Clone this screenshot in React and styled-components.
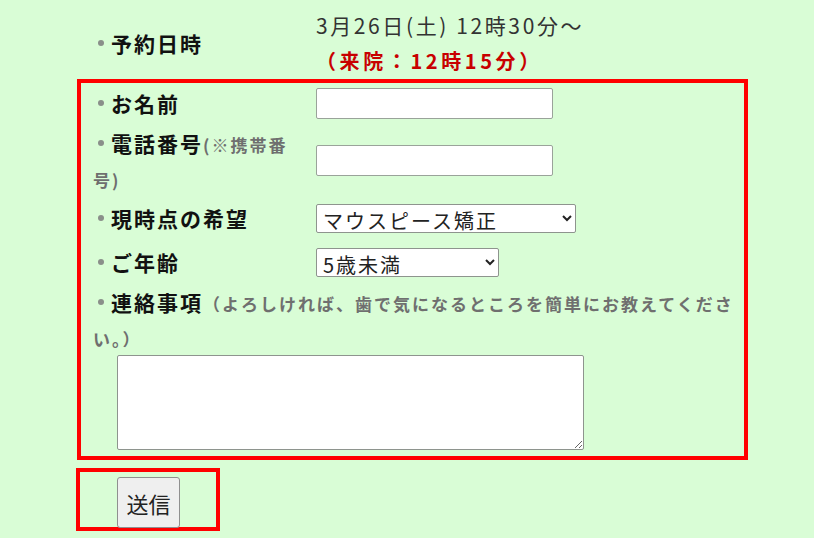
import React from 'react';
import styled, { createGlobalStyle } from 'styled-components';

const GlobalStyle = createGlobalStyle`
  body {
    margin: 0;
    background: #d9fdd6;
    font-family: "Noto Sans CJK JP", "Noto Sans", sans-serif;
    color: #111;
  }
`;

const Page = styled.div`
  padding: 7px 0 0 77px;
`;

const Summary = styled.div`
  display: flex;
  align-items: center;
  padding-left: 16px;
`;

const Label = styled.div`
  flex: none;
  width: ${props => (props.$wide ? 'auto' : '205px')};
  line-height: 35px;
  font-size: 21px;
  font-weight: 700;
  letter-spacing: 2px;
  color: #111;
`;

const Bullet = styled.span`
  display: inline-block;
  width: 6px;
  height: 6px;
  margin: 0 7px 0 5px;
  border-radius: 50%;
  background: #8a8f8a;
  vertical-align: 6px;
  line-height: 0;
`;

const Note = styled.span`
  font-size: 17px;
  line-height: 1;
  letter-spacing: 2px;
  color: #6f6f6f;
`;

const Schedule = styled.div`
  margin-left: 18px;
  line-height: 36px;
`;

const DateText = styled.div`
  font-size: 21px;
  letter-spacing: 2.6px;
  color: #333;
`;

const Arrival = styled.div`
  font-size: 20px;
  font-weight: 700;
  letter-spacing: 3.6px;
  color: #c80000;
`;

const FormBox = styled.div`
  box-sizing: border-box;
  width: 671px;
  border: 4px solid #ff0000;
  padding: 0 0 6.5px 12px;
`;

const Row = styled.div`
  display: flex;
  align-items: center;
  padding: 2.5px 0;
  margin-top: ${props => props.$offset || 0}px;
`;

const Control = styled.div`
  margin-left: 18px;
  display: flex;
`;

const TextInput = styled.input`
  box-sizing: border-box;
  width: 237px;
  height: 31px;
  border: 1px solid #9aa39a;
  border-radius: 2px;
  background: #fff;
  padding: 0 6px;
  font-size: 18px;
`;

const Select = styled.select`
  box-sizing: border-box;
  width: ${props => props.$width}px;
  height: 29px;
  border: 1px solid #8e948e;
  border-radius: 2px;
  background: #fff;
  color: #222;
  padding: 0 2px;
  font-family: "Noto Sans CJK JP", sans-serif;
  font-size: 20px;
  line-height: 27px;
  letter-spacing: 2px;
`;

const MessageBlock = styled.div`
  padding-top: 2.5px;
`;

const Message = styled.textarea`
  display: block;
  box-sizing: border-box;
  width: 467px;
  height: 95px;
  margin-left: 24px;
  border: 1px solid #8e948e;
  border-radius: 2px;
  background: #fff;
  resize: both;
`;

const SubmitBox = styled.div`
  box-sizing: border-box;
  width: 144px;
  height: 63px;
  margin: 8px 0 0 -1px;
  border: 4px solid #ff0000;
  padding: 5px 0 0 37px;
`;

const SubmitButton = styled.button`
  box-sizing: border-box;
  width: 63px;
  height: 51px;
  border: 1px solid #8f8f8f;
  border-radius: 3px;
  background: #efefef;
  color: #222;
  font-family: "Noto Sans CJK JP", sans-serif;
  font-size: 22px;
  padding: 0;
`;

const App = () => (
  <Page>
    <GlobalStyle />
    <Summary>
      <Label>
        <Bullet />
        予約日時
      </Label>
      <Schedule>
        <DateText>3月26日(土) 12時30分～</DateText>
        <Arrival>（来院：12時15分）</Arrival>
      </Schedule>
    </Summary>

    <FormBox>
      <Row>
        <Label>
          <Bullet />
          お名前
        </Label>
        <Control>
          <TextInput type="text" />
        </Control>
      </Row>
      <Row>
        <Label>
          <Bullet />
          電話番号<Note>(※携帯番号)</Note>
        </Label>
        <Control>
          <TextInput type="tel" />
        </Control>
      </Row>
      <Row>
        <Label>
          <Bullet />
          現時点の希望
        </Label>
        <Control>
          <Select $width={260} defaultValue="mouthpiece">
            <option value="mouthpiece">マウスピース矯正</option>
          </Select>
        </Control>
      </Row>
      <Row $offset={4}>
        <Label>
          <Bullet />
          ご年齢
        </Label>
        <Control>
          <Select $width={183} defaultValue="under5">
            <option value="under5">5歳未満</option>
          </Select>
        </Control>
      </Row>
      <MessageBlock>
        <Label $wide>
          <Bullet />
          連絡事項<Note>（よろしければ、歯で気になるところを簡単にお教えてください。）</Note>
        </Label>
        <Message />
      </MessageBlock>
    </FormBox>

    <SubmitBox>
      <SubmitButton type="submit">送信</SubmitButton>
    </SubmitBox>
  </Page>
);

export default App;
